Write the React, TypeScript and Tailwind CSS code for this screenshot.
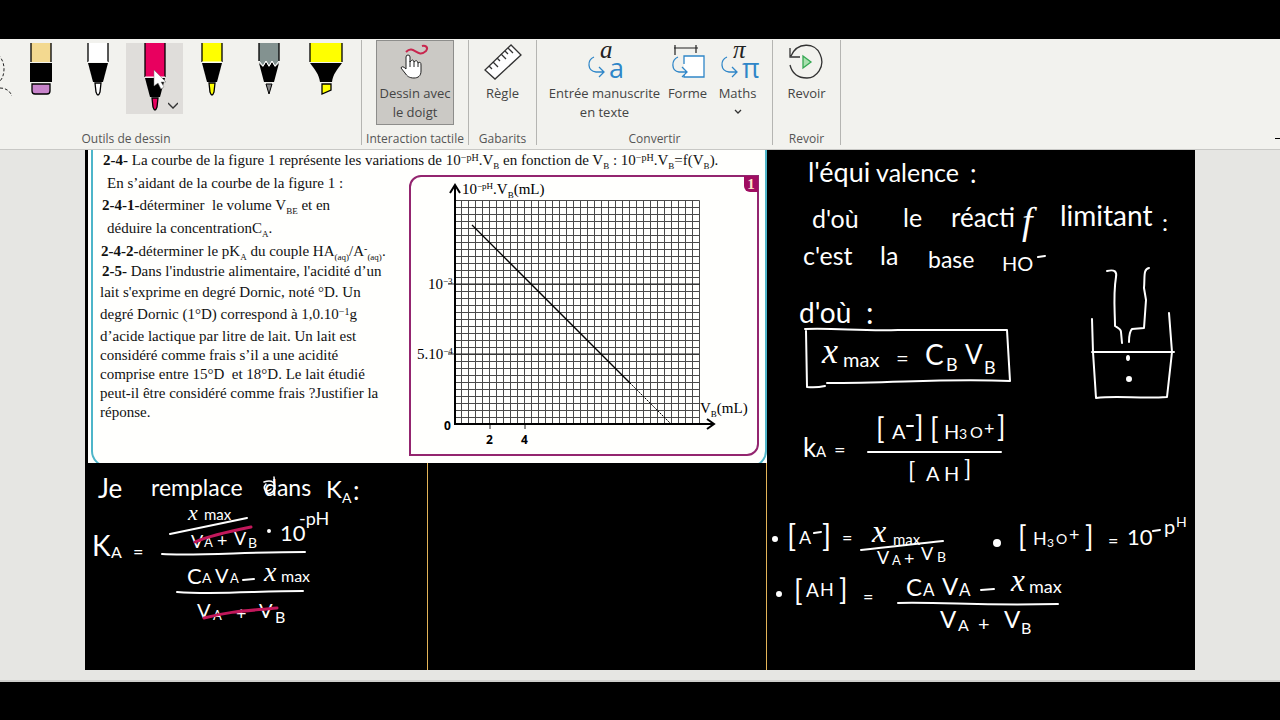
import type { ReactNode } from "react";

const label = "text-center text-[12px] leading-3 text-[#555]";
const command = "flex flex-col items-center text-[13px] leading-[19px] text-[#444]";

type MarkProps = Readonly<{ x: number; y: number; size: number; text: string; italic?: boolean }>;
type Mark = [x: number, y: number, size: number, text: string, italic?: boolean];

function InkText({ x, y, size, text, italic }: MarkProps) {
  return (
    <text
      x={x}
      y={y}
      fontSize={size}
      className={italic ? "font-['Liberation_Serif',serif] italic" : "font-[Lato,sans-serif]"}
    >
      {text}
    </text>
  );
}

type InkProps = Readonly<{ width: number; height: number; title: string; marks: Mark[]; children: ReactNode }>;

function Ink({ width, height, title, marks, children }: InkProps) {
  return (
    <svg
      width={width}
      height={height}
      viewBox={`0 0 ${width} ${height}`}
      role="img"
      aria-label={title}
      className="block max-w-full"
    >
      <g fill="#fff">
        {marks.map(([x, y, size, text, italic]) => (
          <InkText key={`${x}-${y}`} x={x} y={y} size={size} text={text} italic={italic} />
        ))}
      </g>
      <g fill="none" stroke="#fff" strokeWidth="2" strokeLinecap="round" strokeLinejoin="round">
        {children}
      </g>
    </svg>
  );
}

const leftMarks: Mark[] = [
  [12, 35, 26, "Je"],
  [65, 33, 23, "remplace"],
  [178, 33, 23, "dans"],
  [240, 35, 24, "K"],
  [256, 40, 14, "A"],
  [267, 37, 26, ":"],
  [102, 57, 22, "x", true],
  [118, 57, 15, "max"],
  [105, 85, 18, "V"],
  [118, 84, 13, "A"],
  [131, 84, 18, "+"],
  [148, 82, 18, "V"],
  [162, 85, 14, "B"],
  [194, 78, 22, "10"],
  [213, 62, 18, "-pH"],
  [6, 93, 28, "K"],
  [25, 95, 16, "A"],
  [47, 95, 18, "="],
  [101, 121, 22, "C"],
  [116, 120, 14, "A"],
  [129, 120, 20, "V"],
  [144, 120, 13, "A"],
  [178, 118, 28, "x", true],
  [195, 119, 16, "max"],
  [111, 155, 20, "V"],
  [127, 157, 13, "A"],
  [150, 157, 18, "+"],
  [173, 155, 20, "V"],
  [189, 160, 16, "B"],
];

const rightMarks: Mark[] = [
  [40, 32, 27, "l'équi"],
  [108, 32, 25, "valence"],
  [202, 33, 26, ":"],
  [44, 78, 25, "d'où"],
  [135, 77, 25, "le"],
  [183, 77, 26, "réacti"],
  [254, 84, 38, "f", true],
  [292, 76, 28, "limitant"],
  [394, 81, 24, ":"],
  [35, 115, 25, "c'est"],
  [112, 115, 25, "la"],
  [160, 118, 23, "base"],
  [234, 121, 20, "HO"],
  [31, 173, 28, "d'où"],
  [98, 174, 30, ":"],
  [54, 213, 36, "x", true],
  [75, 217, 20, "max"],
  [128, 216, 22, "="],
  [157, 215, 28, "C"],
  [178, 221, 18, "B"],
  [197, 214, 26, "V"],
  [216, 224, 18, "B"],
  [35, 307, 26, "k"],
  [48, 307, 15, "A"],
  [66, 307, 20, "="],
  [108, 289, 28, "["],
  [124, 289, 20, "A"],
  [147, 287, 28, "]"],
  [162, 289, 28, "["],
  [176, 289, 20, "H"],
  [191, 289, 14, "3"],
  [202, 288, 16, "O"],
  [216, 285, 18, "+"],
  [229, 287, 28, "]"],
  [140, 329, 24, "["],
  [158, 331, 20, "A"],
  [176, 331, 20, "H"],
  [196, 327, 24, "]"],
  [19, 397, 30, "["],
  [31, 394, 18, "A"],
  [54, 397, 30, "]"],
  [74, 394, 18, "="],
  [104, 392, 32, "x", true],
  [125, 395, 15, "max"],
  [109, 414, 18, "V"],
  [124, 415, 13, "A"],
  [136, 415, 18, "+"],
  [153, 410, 18, "V"],
  [169, 412, 14, "B"],
  [250, 397, 28, "["],
  [265, 395, 18, "H"],
  [279, 397, 12, "3"],
  [288, 394, 14, "O"],
  [301, 391, 18, "+"],
  [317, 397, 28, "]"],
  [340, 397, 18, "="],
  [359, 395, 22, "10"],
  [396, 384, 20, "p"],
  [408, 377, 14, "H"],
  [26, 451, 28, "["],
  [38, 447, 19, "A"],
  [52, 446, 18, "H"],
  [71, 450, 28, "]"],
  [95, 453, 18, "="],
  [138, 446, 24, "C"],
  [155, 446, 17, "A"],
  [174, 445, 24, "V"],
  [191, 446, 17, "A"],
  [243, 441, 31, "x", true],
  [261, 443, 18, "max"],
  [172, 478, 24, "V"],
  [190, 481, 16, "A"],
  [210, 481, 20, "+"],
  [236, 478, 24, "V"],
  [253, 484, 16, "B"],
];

function Lasso() {
  return (
    <svg width="16" height="56" viewBox="0 0 16 56" className="shrink-0" fill="none" stroke="#222" strokeWidth="1" strokeDasharray="3 2" aria-hidden="true">
      <path d="M-6 9C0 12 4 18 4 26C4 32 2 37-2 40M0 45C6 45 10 48 12 53" />
    </svg>
  );
}

function Eraser() {
  return (
    <svg width="24" height="54" viewBox="-12 0 24 54" aria-hidden="true">
      <path d="M-10 0H10V19H-10Z" fill="#f3d990" />
      <path d="M-10 0V19M10 0V19" stroke="#000" strokeWidth="1.3" />
      <path d="M-11 20H11V39H-11Z" />
      <path d="M-9 41H9V48Q9 51 6 51H-6Q-9 51-9 48Z" fill="#c884cb" stroke="#000" strokeWidth="1.3" />
    </svg>
  );
}

function Pen({ color, long = false }: Readonly<{ color: string; long?: boolean }>) {
  const end = long ? 34 : 19;
  return (
    <svg width="24" height="70" viewBox="-12 0 24 70" aria-hidden="true">
      <path d={`M-10 0H10V${end}H-10Z`} fill={color} />
      <path d={`M-10 0V${end}M10 0V${end}`} stroke="#000" strokeWidth="1.3" />
      <g transform={`translate(0 ${end})`}>
        <path d="M-10 0H10" stroke="#fff" />
        <path d="M-10 1H10L5 20H-5Z" />
        <path d="M-3 21H3L2 30Q1 33 0 33Q-1 33-2 30Z" fill={color} stroke="#000" strokeWidth="1.3" />
      </g>
    </svg>
  );
}

function Pencil() {
  return (
    <svg width="24" height="54" viewBox="-12 0 24 54" aria-hidden="true">
      <path d="M-10 0H10V19L6 23L3 18L0 23L-3 18L-6 23L-10 19Z" fill="#839290" />
      <path d="M-10 0V18M10 0V18" stroke="#000" strokeWidth="1.3" />
      <path d="M-10 20L-6 24L-3 19L0 24L3 19L6 24L10 20L5 39H-5Z" />
      <path d="M-10 18L-6 23L-3 18L0 23L3 18L6 23L10 18" fill="none" stroke="#fff" />
      <path d="M-3 41H3L0 51Z" fill="#888" stroke="#000" />
    </svg>
  );
}

function Highlighter() {
  return (
    <svg width="36" height="54" viewBox="-18 0 36 54" aria-hidden="true">
      <path d="M-16 0H16V19H-16Z" fill="#ff0" />
      <path d="M-16 0V19M16 0V19" stroke="#000" strokeWidth="1.3" />
      <path d="M-16 20H16C11 27 7 31 6 39H-6C-7 31-11 27-16 20Z" />
      <path d="M-4 41H5V47L-4 51Z" fill="#ff0" stroke="#000" strokeWidth="1.3" />
    </svg>
  );
}

function Chevron() {
  return (
    <svg width="8" height="5" viewBox="0 0 8 5" fill="none" stroke="#333" strokeWidth="1.3" aria-hidden="true">
      <path d="M1 1L4 4L7 1" />
    </svg>
  );
}

function ArrowLetter({ top, bottom }: Readonly<{ top: string; bottom: string }>) {
  return (
    <svg width="36" height="38" viewBox="0 0 36 38" className="overflow-visible" aria-hidden="true">
      <text x="13" y="16" fontSize="25" fill="#222" className="font-['Liberation_Serif',serif] italic">{top}</text>
      <text x="22" y="36" fontSize="27" fill="#2f86c8" className="font-['Open_Sans',sans-serif]">{bottom}</text>
      <path d="M7 15C0 18 0 29 9 30H17M12 25L17 30L12 35" fill="none" stroke="#2f86c8" strokeWidth="1.3" />
    </svg>
  );
}

function Group({ name, className, children }: Readonly<{ name: string; className: string; children: ReactNode }>) {
  return (
    <section aria-label={name} className={`flex h-[105px] shrink-0 flex-col justify-between border-r border-[#b5b5b2] ${className}`}>
      <div className="flex justify-center">{children}</div>
      <div className={label}>{name}</div>
    </section>
  );
}

function Ribbon() {
  const tool = "flex h-[71px] w-[57px] shrink-0 justify-center";

  return (
    <header className="flex h-[111px] border-b border-[#c8c8c5] bg-[#f2f2ee] pt-px font-['Open_Sans',sans-serif]">
      <section aria-label="Outils de dessin" className="flex h-[105px] w-[362px] shrink-0 flex-col justify-between border-r border-[#b5b5b2]">
        <div className="flex pt-[3px]">
          <button aria-label="Lasso" className="flex w-[12px] shrink-0 overflow-hidden"><Lasso /></button>
          <button aria-label="Gomme" className={tool}><Eraser /></button>
          <button aria-label="Stylet noir" className={tool}><Pen color="#fff" /></button>
          <button aria-label="Stylet rose" aria-pressed="true" className={`${tool} relative bg-[#dfddda]`}>
            <Pen color="#e8005f" long />
            <span className="absolute right-[5px] bottom-[5px]">
              <svg width="10" height="7" viewBox="0 0 10 7" fill="none" stroke="#333" strokeWidth="1.3" aria-hidden="true">
                <path d="M0 1L5 6L10 1" />
              </svg>
            </span>
            <svg width="14" height="22" viewBox="0 0 14 22" className="absolute top-[26px] left-[27px]" aria-hidden="true">
              <path d="M1 1V17L5 14L8 20L11 18L8 13H13Z" fill="#fff" stroke="#777" strokeWidth=".5" />
            </svg>
          </button>
          <button aria-label="Surligneur fin" className={tool}><Pen color="#ff0" /></button>
          <button aria-label="Crayon" className={tool}><Pencil /></button>
          <button aria-label="Surligneur" className={tool}><Highlighter /></button>
        </div>
        <div className={`${label} w-[252px]`}>Outils de dessin</div>
      </section>

      <Group name="Interaction tactile" className="w-[107px]">
        <button aria-pressed="true" className={`${command} h-[85px] w-[78px] border border-[#8d8d8b] bg-[#cbc9c5] pt-[3px]`}>
          <svg width="30" height="36" viewBox="0 0 30 36" className="mb-[4px]" aria-hidden="true">
            <path d="M6 8C14 0 17 15 26 7C29 3 25 1 22 2" fill="none" stroke="#c8264e" strokeWidth="2" />
            <path d="M6 25V13Q6 11 8 11Q10 11 10 13V18Q13 14 14 18Q17 15 18 19Q21 17 21 21V27C21 32 18 34 14 34C9 34 7 32 5 29L1 24Q2 21 6 25Z" fill="#fff" stroke="#222" />
            <path d="M10 17V23M14 18V23M18 19V23" stroke="#222" />
          </svg>
          <span>Dessin avec<br />le doigt</span>
        </button>
      </Group>

      <Group name="Gabarits" className="w-[68px]">
        <button className={`${command} pt-1`}>
          <svg width="38" height="36" viewBox="0 0 38 36" className="mb-[4px]" fill="none" stroke="#333" strokeWidth="1.3" aria-hidden="true">
            <path d="M1 26L27 1L37 11L11 35Z" fill="#fff" />
            <path d="M5 22L8 25M9 18L14 23M13 14L16 17M17 10L22 15M21 7L24 10M24 4L29 9" />
          </svg>
          <span>Règle</span>
        </button>
      </Group>

      <Group name="Convertir" className="w-[236px]">
        <button className={`${command} w-[118px] pt-[2px] whitespace-nowrap`}>
          <span className="mb-[4px] flex"><ArrowLetter top="a" bottom="a" /></span>
          <span>Entrée manuscrite<br />en texte</span>
        </button>
        <button className={`${command} w-[48px] pt-[2px]`}>
          <svg width="36" height="38" viewBox="0 0 36 38" className="mb-[4px]" fill="none" aria-hidden="true">
            <path d="M4 6H28M5 3V13M26 3V11" stroke="#222" strokeWidth="1.2" />
            <path d="M14 22V14H34V35H14V33" fill="#fff" stroke="#2f86c8" strokeWidth="1.3" />
            <path d="M8 15C1 18 1 29 9 30H17M12 25L17 30L12 35" stroke="#2f86c8" strokeWidth="1.3" />
          </svg>
          <span>Forme</span>
        </button>
        <button className={`${command} w-[52px] pt-[2px]`}>
          <span className="mb-[4px] flex"><ArrowLetter top="π" bottom="π" /></span>
          <span>Maths</span>
          <span className="pt-[6px]"><Chevron /></span>
        </button>
      </Group>

      <Group name="Revoir" className="w-[68px]">
        <button className={`${command} pt-1`}>
          <svg width="36" height="36" viewBox="0 0 36 36" className="mb-[4px]" fill="none" stroke="#333" strokeWidth="1.3" aria-hidden="true">
            <path d="M3 12C9-2 27-2 32 10C38 23 28 34 19 34C10 34 4 29 2 21M2 4V13H12" />
            <path d="M15 12L23 18L15 24Z" fill="#a8e0ae" stroke="#35a853" />
          </svg>
          <span>Revoir</span>
        </button>
      </Group>

      <span className="mt-auto mb-[10px] ml-auto h-px w-[5px] bg-black" />
    </header>
  );
}

const columns = Array.from({ length: 36 }, (_, i) => i * 7);
const rows = Array.from({ length: 33 }, (_, i) => i * 7);

function Sub({ children }: Readonly<{ children: ReactNode }>) {
  return <span className="relative top-1 text-[9px] leading-none">{children}</span>;
}

function Sup({ children }: Readonly<{ children: ReactNode }>) {
  return <span className="relative -top-1 text-[10px] leading-none">{children}</span>;
}

function Figure() {
  return (
    <figure className="relative mt-[2px] h-[281px] w-[350px] shrink-0 rounded-tl-xl rounded-br-xl border-2 border-[#93256f]">
      <figcaption className="absolute -top-px -right-px flex h-4 w-[14px] items-center justify-center rounded-bl-md bg-[#a00d61] text-[15px] font-bold text-[#fbe9c8]">
        1
      </figcaption>
      <svg width="346" height="277" viewBox="0 0 346 277" role="img" aria-label="10⁻ᵖᴴ.VB en fonction de VB" className="font-['Liberation_Serif',serif]">
        <g transform="translate(43.5 23.5)" stroke="#4a4a4a">
          {columns.map((x) => <path key={x} d={`M${x} 0V224`} />)}
          {rows.map((y) => <path key={y} d={`M0 ${y}H245`} />)}
        </g>
        <path d="M37 107H289M37 177H288M79 246V252M114 246V252" stroke="#222" />
        <path d="M44 8V247H302M39 16L44 8L49 16M296 242L303 247L296 252" fill="none" stroke="#000" strokeWidth="2" />
        <path d="M61 48L219 206" stroke="#000" strokeWidth="1.3" />
        <path d="M219 206L259 246" stroke="#000" strokeDasharray="2 1" />
        <g fontSize="15">
          <text x="51" y="17">10<tspan dy="-5" fontSize="9">−pH</tspan><tspan dy="5">.V</tspan><tspan dy="4" fontSize="9">B</tspan><tspan dy="-4">(mL)</tspan></text>
          <text x="17" y="112">10<tspan dy="-5" fontSize="9">−3</tspan></text>
          <text x="6" y="182">5.10<tspan dy="-5" fontSize="9">−4</tspan></text>
          <text x="289" y="236">V<tspan dy="4" fontSize="9">B</tspan><tspan dy="-4">(mL)</tspan></text>
        </g>
        <g fontSize="12" fontWeight="700" className="font-['Open_Sans',sans-serif]">
          <text x="33" y="253">0</text>
          <text x="75" y="267">2</text>
          <text x="110" y="267">4</text>
        </g>
      </svg>
    </figure>
  );
}

function Exercise() {
  return (
    <article className="relative ml-[3px] h-[313px] overflow-hidden bg-[#fffffd] font-['Liberation_Serif',serif] text-[15px] leading-5 whitespace-nowrap text-[#111]">
      <div className="absolute inset-x-0 top-0 -bottom-1 ml-[3px] rounded-b-2xl border-x-2 border-b-2 border-[#4eb5c9]" />
      <p className="pl-[15px]">
        <b>2-4-</b> La courbe de la figure 1 représente les variations de 10<Sup>−pH</Sup>.V<Sub>B</Sub>
        {" "}en fonction de V<Sub>B</Sub> : 10<Sup>−pH</Sup>.V<Sub>B</Sub>=f(V<Sub>B</Sub>).
      </p>
      <div className="flex justify-between pt-[3px] pr-[8px] pl-[12px]">
        <div>
          <p className="pb-[2px] pl-[7px]">En s’aidant de la courbe de la figure 1 :</p>
          <p className="pb-[3px] pl-[2px]"><b>2-4-1-</b>déterminer&nbsp; le volume&nbsp;V<Sub>BE</Sub>&nbsp;et en</p>
          <p className="pb-[3px] pl-[7px]">déduire la concentrationC<Sub>A</Sub>.</p>
          <p className="pl-px"><b>2-4-2-</b>déterminer le pK<Sub>A</Sub> du couple HA<Sub>(aq)</Sub>/A<Sup>-</Sup><Sub>(aq)</Sub>.</p>
          <p className="pb-px pl-[2px]"><b>2-5-</b> Dans l'industrie alimentaire, l'acidité d’un</p>
          <p className="pb-[2px]">lait s'exprime en degré Dornic, noté °D. Un</p>
          <p className="pb-[2px]">degré Dornic (1°D) correspond à 1,0.10<Sup>−1</Sup>g</p>
          <p>d’acide lactique par litre de lait. Un lait est</p>
          <div className="leading-[19px]">
            <p>considéré comme frais s’il a une acidité</p>
            <p>comprise entre 15°D&nbsp; et 18°D. Le lait étudié</p>
            <p>peut-il être considéré comme frais ?Justifier la</p>
            <p>réponse.</p>
          </div>
        </div>
        <Figure />
      </div>
    </article>
  );
}

export default function App() {
  return (
    <div className="flex min-h-screen flex-col bg-black">
      <div className="h-[39px]" />
      <Ribbon />
      <main className="border-b-2 border-[#cfcfcc] bg-[#e6e6e3] px-[85px] pb-[10px]">
        <div className="grid grid-cols-[682fr_428fr] bg-black">
          <div className="flex min-w-0 flex-col">
            <Exercise />
            <div className="grid flex-1 grid-cols-[343fr_339fr]">
              <div className="min-w-0 border-r border-[#e3b458] pl-px">
                <Ink width={341} height={207} title="Je remplace dans KA" marks={leftMarks}>
                  <path d="M84 71L161 55M76 91C110 93 160 89 219 89M91 129C130 132 170 128 217 128M157 117L168 116" />
                  <path d="M180 21C176 26 180 30 185 26M178 19C186 16 191 20 188 27C184 33 179 30 179 26M188 14L189 26" strokeWidth="1.5" />
                  <circle cx="183" cy="68" r="1" />
                  <path d="M109 79C125 72 145 68 165 64M118 155C145 148 160 148 191 145" stroke="#c2185b" strokeWidth="3" />
                </Ink>
              </div>
              <div className="min-w-0 border-r border-[#e3b458]" />
            </div>
          </div>
          <div className="min-w-0 pl-px">
            <Ink width={427} height={520} title="Réactif limitant et constante KA" marks={rightMarks}>
              <path d="M270 107L277 106M139 276H145M46 383L53 382M385 381L392 380M213 440L226 439" />
              <path d="M38 181L39 237Q48 238 57 236M37 179C70 178 90 181 130 180H239L242 231C180 228 130 233 59 233" />
              <path d="M100 302H233M93 400C125 397 145 394 175 391M130 453C180 452 210 456 290 454" />
              <path d="M339 121C347 119 349 122 348 127C345 145 347 162 347 176C350 178 353 179 353 182L354 193" />
              <path d="M381 118C375 119 377 127 376 138L378 150L376 178L364 179Q361 182 361 192" />
              <path d="M324 169L325 202L328 248C350 245 370 249 399 247L404 202L401 163M324 202H406" />
              <g fill="#fff">
                <ellipse cx="360" cy="208" rx="1" ry="2" />
                <circle cx="361" cy="229" r="2" />
                <circle cx="7" cy="389" r="2" />
                <circle cx="229" cy="393" r="3" />
                <circle cx="11" cy="444" r="2" />
              </g>
            </Ink>
          </div>
        </div>
      </main>
    </div>
  );
}
